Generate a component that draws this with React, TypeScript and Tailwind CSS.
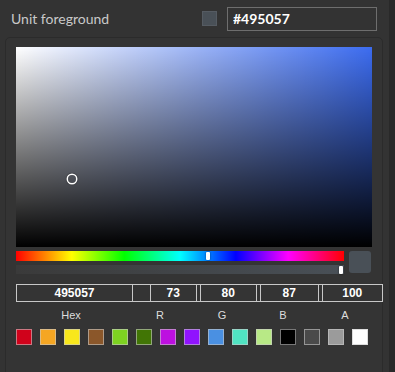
import React from "react";

const PRESETS = [
  "#D0021B",
  "#F5A623",
  "#F8E71C",
  "#8B572A",
  "#7ED321",
  "#417505",
  "#BD10E0",
  "#9013FE",
  "#4A90E2",
  "#50E3C2",
  "#B8E986",
  "#000000",
  "#4A4A4A",
  "#9B9B9B",
  "#FFFFFF",
];

const LABELS: Array<{ text: string; width: string }> = [
  { text: "Hex", width: "w-[110px]" },
  { text: "R", width: "w-[68px]" },
  { text: "G", width: "w-[56px]" },
  { text: "B", width: "w-[66px]" },
  { text: "A", width: "w-[58px]" },
];

export default function App() {
  const [hex, setHex] = React.useState("#495057");

  return (
    <div className="flex h-[372px] w-[395px] overflow-hidden bg-[#333333] font-['Lato',sans-serif]">
      <div className="flex w-[388px] flex-col">
        <div className="flex h-[37px] shrink-0 items-center pl-[11px]">
          <span className="w-[191px] text-[14px] text-[#c9c9c9]">Unit foreground</span>
          <span className="h-[15px] w-[15px] border border-[#555b62] bg-[#495057]" />
          <input
            value={hex}
            onChange={(e) => setHex(e.target.value)}
            className="ml-[10px] h-[24px] w-[150px] border border-[#6e6e6e] bg-transparent px-[5px] text-[14px] font-bold text-white outline-none"
          />
        </div>

        <div className="ml-[5px] h-[360px] w-[378px] shrink-0 rounded-[5px] border border-[#2b2b2b] bg-[#343434] pl-[10px] pt-[9px]">
          <SaturationBox />

          <div className="mt-[4px] flex">
            <div className="flex w-[328px] flex-col gap-[4px]">
              <div className="relative h-[10px] bg-[linear-gradient(to_right,#ff0000_0%,#ffff00_17%,#00ff00_33%,#00ffff_50%,#0000ff_67%,#ff00ff_83%,#ff0000_100%)]">
                <div className="absolute left-[190px] top-[1px] h-[8px] w-[4px] rounded-[1px] bg-white shadow-[0_0_2px_rgba(0,0,0,0.6)]" />
              </div>
              <div className="relative h-[9px] bg-[linear-gradient(to_right,#3a3a3a,#495057)]">
                <div className="absolute left-[323px] top-[1px] h-[8px] w-[4px] rounded-[1px] bg-white shadow-[0_0_2px_rgba(0,0,0,0.6)]" />
              </div>
            </div>
            <div className="ml-[5px] h-[22px] w-[22px] rounded-[3px] bg-[#495057]" />
          </div>

          <div className="mt-[10px] flex h-[18px] w-[367px] gap-[3px] border-y border-[#c8c8c8] font-['Liberation_Sans',Arial,sans-serif] text-[12px] font-bold text-white">
            <Cell value="495057" width="w-[118px]" />
            <div className="w-[11px]" />
            <Cell value="73" width="w-[47px]" />
            <Cell value="80" width="w-[58px]" />
            <Cell value="87" width="w-[59px]" />
            <Cell value="100" width="w-[62px]" />
          </div>

          <div className="mt-[7px] flex h-[13px] font-['Liberation_Sans',Arial,sans-serif] text-[11px] text-[#dddddd]">
            {LABELS.map((label) => (
              <span key={label.text} className={`${label.width} text-center leading-[13px]`}>
                {label.text}
              </span>
            ))}
          </div>

          <div className="mt-[7px] flex gap-[8px]">
            {PRESETS.map((color) => (
              <button
                key={color}
                type="button"
                onClick={() => setHex(color)}
                className="h-[16px] w-[16px] shadow-[inset_0_0_0_1px_rgba(200,200,200,0.6)]"
                style={{ backgroundColor: color }}
              />
            ))}
          </div>
        </div>
      </div>
      <div className="ml-[1px] h-full w-[6px] bg-[#292929]" />
    </div>
  );
}

function SaturationBox() {
  return (
    <div className="relative h-[200px] w-[356px] bg-[#3c6cf0]">
      <div className="absolute inset-0 bg-[linear-gradient(to_right,#ffffff,rgba(255,255,255,0))]" />
      <div className="absolute inset-0 bg-[linear-gradient(to_bottom,rgba(0,0,0,0),#000000)]" />
      <div className="absolute left-[52px] top-[128px] h-[8px] w-[8px] rounded-full shadow-[0_0_0_1.5px_#ffffff,0_0_1px_2px_rgba(0,0,0,0.4)]" />
    </div>
  );
}

function Cell({ value, width }: { value: string; width: string }) {
  return (
    <div className={`${width} flex items-center justify-center border-x border-[#c8c8c8] leading-none`}>
      {value}
    </div>
  );
}
